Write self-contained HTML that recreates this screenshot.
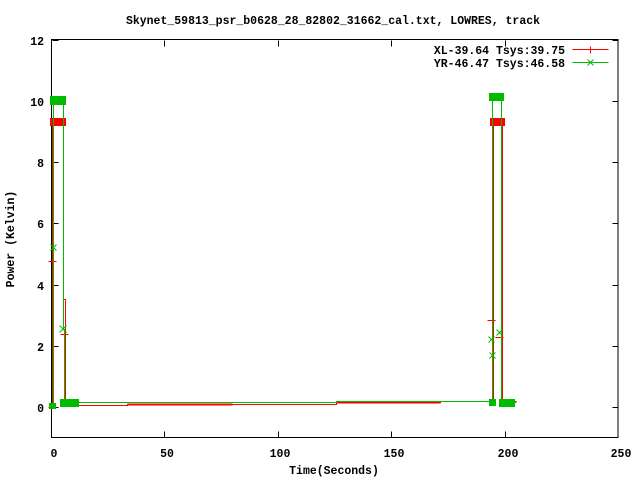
<!DOCTYPE html>
<html><head><style>
html,body{margin:0;padding:0;background:#fff;}
svg{display:block;}
text{font-family:"Liberation Mono",monospace;font-weight:bold;font-size:11.5px;fill:#000;}
</style></head><body>
<svg width="640" height="480" viewBox="0 0 640 480">
<rect width="640" height="480" fill="#fff"/>
<text x="333" y="24" text-anchor="middle">Skynet_59813_psr_b0628_28_82802_31662_cal.txt, LOWRES, track</text>
<rect x="51.5" y="39.5" width="566.5" height="398" fill="none" stroke="#000" stroke-width="1"/>
<g stroke="#000" transform="translate(0.5,0.5)">
<path d="M52 407h6M52 346h6M52 285h6M52 223h6M52 162h6M52 101h6M52 40h6"/>
<path d="M618 407h-6M618 346h-6M618 285h-6M618 223h-6M618 162h-6M618 101h-6M618 40h-6"/>
<path d="M164 437v-6M278 437v-6M391 437v-6M505 437v-6M164 40v6M278 40v6M391 40v6M505 40v6"/>
</g>
<g text-anchor="end">
<text x="44" y="412">0</text><text x="44" y="351">2</text><text x="44" y="290">4</text>
<text x="44" y="228">6</text><text x="44" y="167">8</text><text x="44" y="106">10</text><text x="44" y="45">12</text>
</g>
<g text-anchor="middle">
<text x="54" y="457">0</text><text x="167" y="457">50</text><text x="280" y="457">100</text>
<text x="394" y="457">150</text><text x="508" y="457">200</text><text x="621" y="457">250</text>
<text x="334" y="474">Time(Seconds)</text>
</g>
<text x="0" y="0" text-anchor="middle" transform="translate(14,239) rotate(-90)">Power (Kelvin)</text>
<text x="565" y="54" text-anchor="end">XL-39.64 Tsys:39.75</text>
<text x="565" y="67" text-anchor="end">YR-46.47 Tsys:46.58</text>
<g transform="translate(0.5,0.5)">
<path d="M572 49h36M590 46v7" stroke="#f00"/>
<path d="M572 62h36M587 59l6 6M593 59l-6 6" stroke="#0b0"/>
<g stroke="#f00" fill="none" stroke-width="1">
<path d="M52 406V123H57V123H63V180V299H65V404H75V405H127V404H232V404H336V402H440V401H493V373V123H500V123H502V401H516"/>
<path d="M48 407h8M48 261h8M60 334h8M487 320h8M495 337h8"/>
</g>
<path d="M127 404H232M336 402H440" stroke="#f00" stroke-width="2"/>
</g>
<g fill="#f00">
<rect x="50" y="118" width="16" height="8"/>
<rect x="490" y="118" width="15" height="8"/>
<rect x="60" y="400" width="18" height="7"/>
<rect x="499" y="400" width="16" height="7"/>
<rect x="49" y="404" width="7" height="5"/>
</g>
<g stroke="#0b0" fill="none" stroke-width="1" transform="translate(0.5,0.5)">
<path d="M53 406V101H55V101H63V101V329H64V402H76V402H127V402H336V401H440V401H492V369V96H497V96H501V372V402H516"/>
<path d="M50 244l6 6M56 244l-6 6M59 325l7 7M66 325l-7 7M488 336l6 6M494 336l-6 6M496 329l6 6M502 329l-6 6M489 352l6 6M495 352l-6 6"/>
</g>
<g fill="#0b0">
<rect x="50" y="96" width="16" height="9"/>
<rect x="489" y="93" width="15" height="8"/>
<rect x="60" y="399" width="19" height="8"/>
<rect x="499" y="399" width="16" height="8"/>
<rect x="489" y="399" width="7" height="7"/>
<rect x="49" y="403" width="7" height="6"/>
</g>
</svg>
</body></html>
